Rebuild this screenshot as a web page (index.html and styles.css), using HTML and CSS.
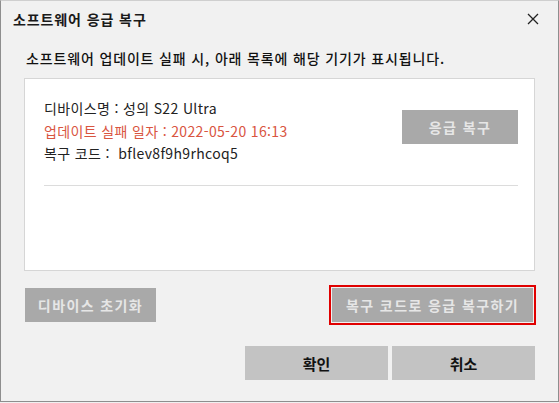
FILE: index.html
```html
<!DOCTYPE html>
<html lang="ko">
<head>
<meta charset="utf-8">
<link rel="stylesheet" href="styles.css">
</head>
<body>
<div class="window">
  <div class="titlebar">
    <span class="title">소프트웨어 응급 복구</span>
    <svg class="close" width="12" height="12" viewBox="0 0 12 12"><path d="M1 1 L11 11 M11 1 L1 11" stroke="#222" stroke-width="1.3" fill="none"/></svg>
  </div>
  <div class="subtitle">소프트웨어 업데이트 실패 시, 아래 목록에 해당 기기가 표시됩니다.</div>
  <div class="panel">
    <div class="item">
      <div class="info">
        <div class="line">디바이스명 : 성의 S22 Ultra</div>
        <div class="line red">업데이트 실패 일자 : 2022-05-20 16:13</div>
        <div class="line">복구 코드 :&nbsp; bflev8f9h9rhcoq5</div>
      </div>
      <div class="btn disabled small">응급 복구</div>
    </div>
    <div class="sep"></div>
  </div>
  <div class="row1">
    <div class="btn disabled reset">디바이스 초기화</div>
    <div class="focus"><div class="btn disabled code">복구 코드로 응급 복구하기</div></div>
  </div>
  <div class="row2">
    <div class="btn main">확인</div>
    <div class="btn main">취소</div>
  </div>
</div>
</body>
</html>
```
FILE: styles.css
```css
html, body { margin: 0; padding: 0; background: #f0f0f0; }
body { font-family: "Noto Sans CJK KR", "Noto Sans", sans-serif; }
.window {
  width: 559px; height: 402px; box-sizing: border-box;
  border: 1px solid #8e8e8e; border-top-color: #cfcfcf;
  background: #f1f1f1; position: relative;
}
.titlebar {
  height: 36px; display: flex; align-items: center; justify-content: space-between;
  padding: 0 19px 0 12px; box-sizing: border-box;
}
.title { font-size: 14px; font-weight: 700; color: #1a1a1a; letter-spacing: 0.9px; }
.close { display: block; }
.subtitle {
  margin: 11px 0 0 25px; font-size: 14px; color: #111; line-height: 20px; font-weight: 500;
  letter-spacing: 0.85px;
}
.panel {
  margin: 10px 0 0 23px; width: 511px; height: 193px; box-sizing: border-box;
  background: #fff; border: 1px solid #d6d6d6; padding: 0 16px 0 19px;
}
.item { display: flex; justify-content: space-between; align-items: flex-start; padding-top: 18px; }
.info { font-size: 14px; color: #222; letter-spacing: 0.35px; }
.line { line-height: 22.5px; height: 22.5px; }
.red { color: #d9553f; }
.btn {
  display: flex; align-items: center; justify-content: center;
  height: 34px; box-sizing: border-box; font-size: 14px;
}
.disabled { background: #a9a9a9; color: #e6e6e6; font-weight: 700; letter-spacing: 1.4px; }
.small { width: 116px; margin-top: 13px; }
.sep { height: 1px; background: #dcdcdc; margin-top: 20px; }
.row1 {
  display: flex; justify-content: space-between; align-items: center;
  margin: 14px 22px 0 24px;
}
.reset { width: 131px; }
.focus { border: 2px solid #e00000; padding: 1px; }
.code { width: 201px; }
.row2 { display: flex; justify-content: flex-end; gap: 4px; margin: 21px 23px 0 0; }
.main { width: 143px; background: #c3c3c3; color: #111; font-weight: 700; font-size: 15px; }
```
